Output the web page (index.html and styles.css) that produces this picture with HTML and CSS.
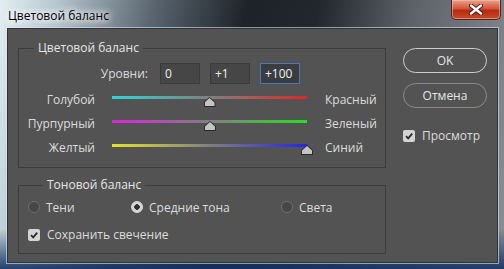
FILE: index.html
```html
<!DOCTYPE html>
<html lang="ru">
<head>
    <meta charset="UTF-8">
    <title>Цветовой баланс</title>
    <link rel="stylesheet" href="styles.css">
</head>
<body>
    <div class="window">
        <div class="titlebar">
            <span class="title">Цветовой баланс</span>
            <button class="close">
                <svg width="14" height="11" viewBox="0 0 14 11">
                    <path d="M2 1.5 L12 9.5 M12 1.5 L2 9.5" stroke="#3a1a14" stroke-width="4.2" stroke-linecap="round"/>
                    <path d="M2 1.5 L12 9.5 M12 1.5 L2 9.5" stroke="#fff" stroke-width="2.4" stroke-linecap="round"/>
                </svg>
            </button>
        </div>

        <div class="client">
            <div class="main">
                <fieldset class="group balance">
                    <legend>Цветовой баланс</legend>
                    <div class="levels">
                        <span class="levels-label">Уровни:</span>
                        <input class="field" value="0">
                        <input class="field" value="+1">
                        <input class="field active" value="+100">
                    </div>

                    <div class="slider-row">
                        <span class="side-left">Голубой</span>
                        <div class="track-box">
                            <div class="track cyan-red"></div>
                            <span class="thumb" style="left: 50%"></span>
                        </div>
                        <span class="side-right">Красный</span>
                    </div>
                    <div class="slider-row">
                        <span class="side-left">Пурпурный</span>
                        <div class="track-box">
                            <div class="track magenta-green"></div>
                            <span class="thumb" style="left: 50.25%"></span>
                        </div>
                        <span class="side-right">Зеленый</span>
                    </div>
                    <div class="slider-row">
                        <span class="side-left">Желтый</span>
                        <div class="track-box">
                            <div class="track yellow-blue"></div>
                            <span class="thumb" style="left: 100%"></span>
                        </div>
                        <span class="side-right">Синий</span>
                    </div>
                </fieldset>

                <fieldset class="group tone">
                    <legend>Тоновой баланс</legend>
                    <div class="radios">
                        <label class="radio r-shadows"><span class="dot"></span>Тени</label>
                        <label class="radio r-mid"><span class="dot checked"></span>Средние тона</label>
                        <label class="radio"><span class="dot"></span>Света</label>
                    </div>
                    <label class="check"><span class="box">
                        <svg width="10" height="10" viewBox="0 0 10 10"><path d="M2 5.2 L4.2 7.4 L8.2 2.6" fill="none" stroke="#2b2b2b" stroke-width="1.8"/></svg>
                    </span>Сохранить свечение</label>
                </fieldset>
            </div>

            <div class="actions">
                <button class="btn primary">OK</button>
                <button class="btn">Отмена</button>
                <label class="check preview"><span class="box">
                    <svg width="10" height="10" viewBox="0 0 10 10"><path d="M2 5.2 L4.2 7.4 L8.2 2.6" fill="none" stroke="#2b2b2b" stroke-width="1.8"/></svg>
                </span>Просмотр</label>
            </div>
        </div>
    </div>
</body>
</html>
```

FILE: styles.css
```css
html, body {
    margin: 0;
    padding: 0;
}

body {
    width: 504px;
    height: 269px;
    overflow: hidden;
    font-family: 'Open Sans', 'Liberation Sans', sans-serif;
    font-size: 12px;
    background:
        linear-gradient(180deg, rgba(0, 0, 0, 0) 85%, rgba(20, 50, 100, 0.9) 100%),
        linear-gradient(100deg, #e4eef2 0%, #b8c8d0 10%, #5a6570 28%, #1e2329 45%, #22272d 58%, #5c6268 75%, #8a9095 100%);
}

.window {
    display: flex;
    flex-direction: column;
    height: 269px;
}

.titlebar {
    height: 28px;
    display: flex;
    justify-content: space-between;
    align-items: flex-start;
}

.title {
    margin: 7px 0 0 8px;
    font-family: 'Open Sans', sans-serif;
    font-size: 12px;
    color: #000;
    text-shadow: 0 0 6px #fff, 0 0 8px #fff, 0 0 10px rgba(255, 255, 255, 0.8);
}

.close {
    width: 50px;
    height: 20px;
    margin-right: 3px;
    padding: 0;
    border: 1px solid #4a2a22;
    border-top: none;
    border-radius: 0 0 5px 5px;
    background: linear-gradient(180deg, #e8a48c 0%, #d2553a 45%, #b82a10 55%, #c84a2a 100%);
    box-shadow: inset 0 0 0 1px rgba(255, 200, 180, 0.5);
    display: flex;
    justify-content: center;
    align-items: center;
}

.client {
    margin: 0 6px 6px 7px;
    flex: 1;
    background: #535353;
    border: 1px solid #2e343a;
    box-shadow: 0 0 0 1px rgba(220, 230, 240, 0.6);
    display: flex;
    padding: 11px 0 0 10px;
    color: #dcdcdc;
}

.main {
    width: 368px;
    display: flex;
    flex-direction: column;
    gap: 9px;
}

.group {
    margin: 0;
    border: 1px solid #3d3d3d;
    padding: 0;
}

.group legend {
    margin-left: 15px;
    padding: 0 4px;
    line-height: 16px;
    color: #e6e6e6;
}

.balance {
    height: 128px;
    box-sizing: border-box;
    padding-top: 7px;
}

.levels {
    display: flex;
    align-items: center;
    height: 21px;
}

.levels-label {
    width: 129px;
    text-align: right;
    margin-right: 12px;
}

.field {
    width: 40px;
    height: 21px;
    box-sizing: border-box;
    margin-right: 10px;
    padding: 0 4px;
    background: #464646;
    border: 1px solid #3a3a3a;
    color: #f0f0f0;
    font-family: inherit;
    font-size: 12px;
}

.field.active {
    background: #393d42;
    border-color: #4a78b4;
}

.slider-row {
    display: flex;
    height: 24px;
}

.levels + .slider-row {
    margin-top: 7px;
}

.side-left {
    width: 76px;
    text-align: right;
    line-height: 18px;
}

.side-right {
    margin-left: 18px;
    line-height: 18px;
}

.track-box {
    position: relative;
    width: 195px;
    margin-left: 17px;
    padding-top: 5px;
}

.track {
    height: 3px;
}

.cyan-red {
    background: linear-gradient(90deg, #2ad7d7, #808080 50%, #e02626);
}

.magenta-green {
    background: linear-gradient(90deg, #e020e0, #808080 50%, #24e024);
}

.yellow-blue {
    background: linear-gradient(90deg, #e4e428, #808080 50%, #2424e8);
}

.thumb {
    position: absolute;
    top: 6px;
    width: 12px;
    height: 10px;
    margin-left: -6px;
    background: #2a2a2a;
    clip-path: polygon(50% 0, 100% 55%, 100% 100%, 0 100%, 0 55%);
}

.thumb::after {
    content: "";
    position: absolute;
    inset: 1px;
    background: #c4c4c4;
    clip-path: polygon(50% 0, 100% 55%, 100% 100%, 0 100%, 0 55%);
}

.tone {
    height: 77px;
    box-sizing: border-box;
    padding: 6px 0 0 9px;
}

.radios {
    display: flex;
    align-items: center;
    height: 16px;
}

.radio {
    display: flex;
    align-items: center;
    gap: 6px;
}

.r-shadows {
    width: 103px;
}

.r-mid {
    width: 150px;
}

.dot {
    width: 12px;
    height: 12px;
    box-sizing: border-box;
    border-radius: 50%;
    border: 1px solid #707070;
    background: #464646;
}

.dot.checked {
    background: radial-gradient(circle, #2e2e2e 0 2.5px, #d6d6d6 3px);
    border-color: #d6d6d6;
}

.check {
    display: flex;
    align-items: center;
    gap: 7px;
    margin-top: 11px;
}

.box {
    width: 12px;
    height: 12px;
    border-radius: 2px;
    background: #d4d4d4;
    display: flex;
    justify-content: center;
    align-items: center;
}

.actions {
    margin: 8px 0 0 17px;
    width: 84px;
    display: flex;
    flex-direction: column;
    gap: 10px;
}

.btn {
    height: 25px;
    flex: none;
    border-radius: 13px;
    border: 1px solid #8c8c8c;
    background: transparent;
    color: #e6e6e6;
    font-family: inherit;
    font-size: 12px;
    padding: 0;
}

.btn.primary {
    border-color: #cfcfcf;
}

.check.preview {
    margin-top: 9px;
    gap: 7px;
}
```
